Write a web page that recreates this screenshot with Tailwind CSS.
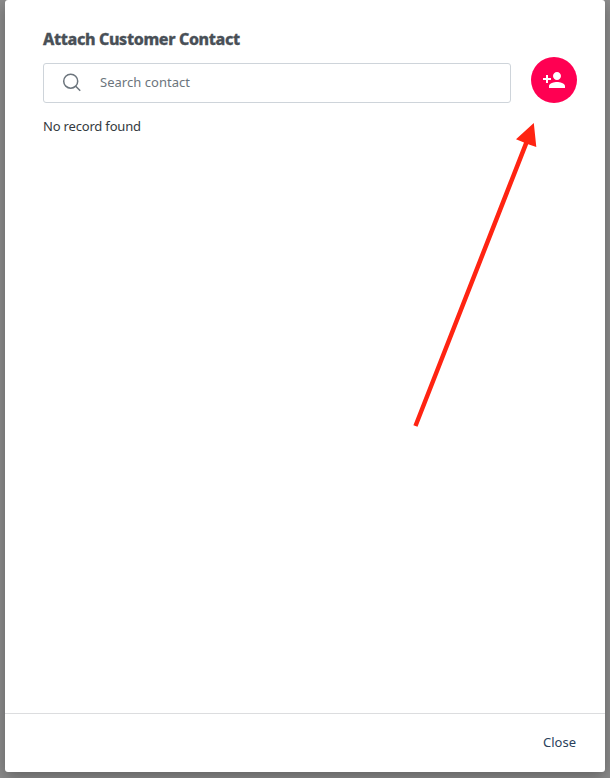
<!DOCTYPE html>
<html lang="en">
<head>
<meta charset="utf-8">
<title>Attach Customer Contact</title>
<script src="https://cdn.jsdelivr.net/npm/@tailwindcss/browser@4"></script>
</head>
<body class="h-[778px] overflow-hidden bg-[#8c8c8c] px-[5px] font-['Noto_Sans',sans-serif]">
<main class="relative flex h-[772px] flex-col rounded-[3px] bg-white shadow-[0_5px_15px_rgba(0,0,0,0.3)]">
  <section class="flex-1 px-[38px] pt-[27px]">
    <h1 class="h-[24px] whitespace-nowrap text-[16px] leading-[24px] font-extrabold tracking-[-0.36px] text-[#495057] [-webkit-text-stroke:0.3px_#495057]">Attach Customer Contact</h1>
    <div class="mt-[6px] flex h-[46px] w-[534px] items-start justify-between">
      <label class="mt-[6px] flex h-[40px] w-[468px] items-center rounded-[3px] border border-[#ced4da] pl-[18px]">
        <svg class="h-[20px] w-[20px] shrink-0" viewBox="0 0 20 20" fill="none" stroke="#6c757d" stroke-width="1.5"><circle cx="8.7" cy="8.2" r="7"/><path d="M13.7 13.2 18.2 17.7"/></svg>
        <input class="ml-[18px] w-[380px] text-[13px] tracking-[0.03px] outline-none placeholder:text-[#6c757d]" placeholder="Search contact">
      </label>
      <button aria-label="Add contact" class="flex h-[46px] w-[46px] items-center justify-center rounded-full bg-[#ff0052]">
        <svg class="h-[24px] w-[24px]" viewBox="0 0 24 24" fill="#fff"><path d="M15 12c2.210 0 4-1.790 4-4s-1.790-4-4-4-4 1.790-4 4 1.790 4 4 4zm-9-2V7H4v3H1v2h3v3h2v-3h3v-2H6zm9 4c-2.670 0-8 1.340-8 4v2h16v-2c0-2.660-5.330-4-8-4z"/></svg>
      </button>
    </div>
    <p class="mt-[13px] text-[13px] leading-[20px] tracking-[-0.18px] text-[#343a40]">No record found</p>
  </section>
  <footer class="flex h-[59px] items-center justify-end border-t border-[#dcdddf] pr-[29px] pb-[2px]">
    <button class="text-[13px] leading-[20px] text-[#2a3f5c]">Close</button>
  </footer>
  <svg class="pointer-events-none absolute left-[405px] top-[115px] h-[320px] w-[135px]" viewBox="410 115 135 320" fill="#ff2412"><path d="M413.400 425.200 524 142.500 516 139.300 533.800 123 536.300 147 528.200 144.200 417.500 426.800z"/></svg>
</main>
</body>
</html>
